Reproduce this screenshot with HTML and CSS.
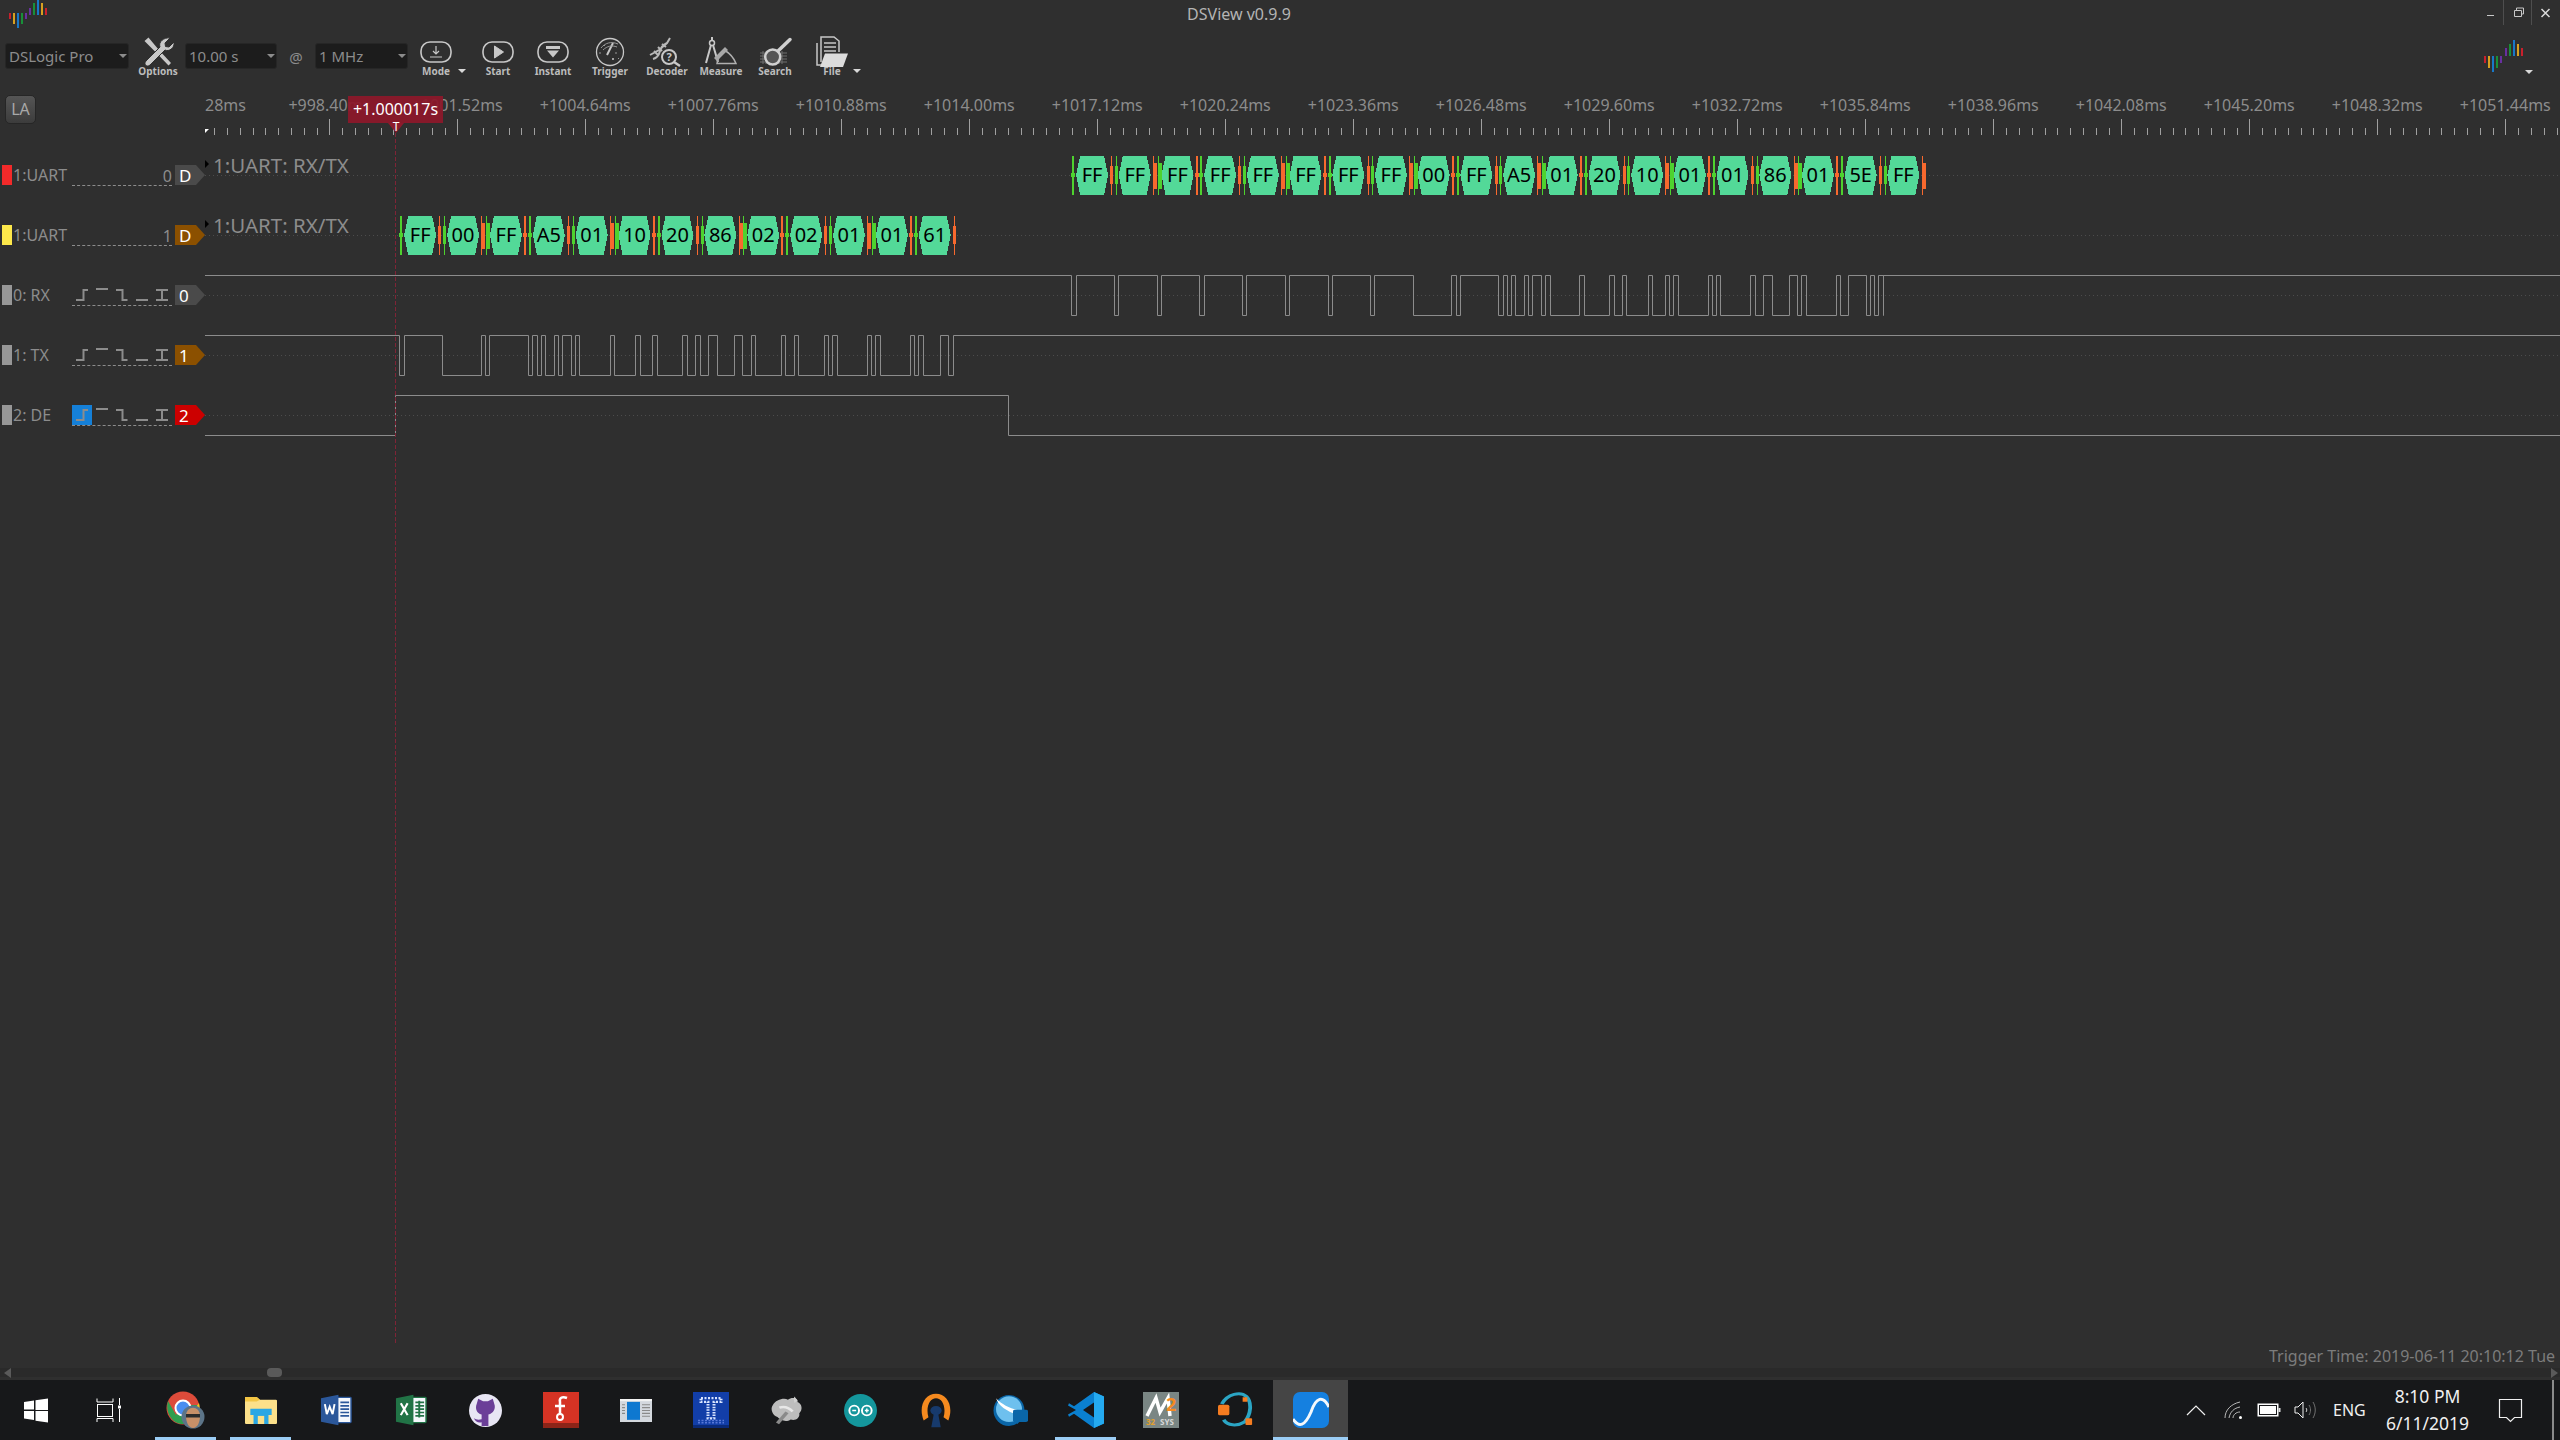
FILE: index.html
```html
<!DOCTYPE html>
<html lang="en">

<head>
    <meta charset="UTF-8">
    <title>DSView v0.9.9</title>
    <link rel="stylesheet" href="styles.css">
</head>

<body>
    <div class="window">
        <!-- title bar -->
        <div class="titlebar">
            <svg class="logo" width="48" height="28" viewBox="0 0 48 28">
                <rect x="9" y="13" width="2" height="6" fill="#c8202c" />
                <rect x="13" y="13" width="2" height="11" fill="#d8a020" />
                <rect x="17" y="13" width="2" height="15" fill="#1878c8" />
                <rect x="21" y="13" width="2" height="11" fill="#189038" />
                <rect x="25" y="13" width="2" height="6" fill="#6830a0" />
                <rect x="29" y="8" width="2" height="7" fill="#6830a0" />
                <rect x="33" y="3" width="2" height="12" fill="#189038" />
                <rect x="37" y="0" width="2" height="15" fill="#1878c8" />
                <rect x="41" y="3" width="2" height="12" fill="#d8a020" />
                <rect x="45" y="8" width="2" height="7" fill="#c8202c" />
            </svg>
            <span class="title">DSView v0.9.9</span>
            <div class="win-buttons">
                <svg class="win-btn" width="28" height="25" viewBox="0 0 28 25">
                    <path d="M11 15.500h7" stroke="#c8c8c8" stroke-width="1" />
                </svg>
                <svg class="win-btn win-btn-line" width="28" height="25" viewBox="0 0 28 25">
                    <path d="M10.500 10.500h7v6h-7zM12.500 10.500v-2.500h7v6h-2" fill="none" stroke="#c8c8c8" />
                </svg>
                <svg class="win-btn win-btn-line" width="28" height="25" viewBox="0 0 28 25">
                    <path d="M9.500 9l8 8M17.500 9l-8 8" stroke="#dcdcdc" stroke-width="1.500" />
                </svg>
            </div>
        </div>

        <!-- toolbar -->
        <div class="toolbar">
            <div class="combo combo-device">DSLogic Pro</div>
            <div class="tool tool-options">
                <svg width="32" height="32" viewBox="0 0 32 32">
                    <path d="M2.500 5l4-3.500 10 12 12.500 13.500-2.500 2.500-13-13.500z" fill="#c8c8c8" />
                    <path d="M28 2l-5 5 .5 3.500 3.500 .5 5-5c1 6-5 10-9 8L8 29c-3 3-7-1-4-4L18 11C16 6 22 1 28 2z" fill="#c8c8c8" stroke="#2f2f2f" stroke-width="1" />
                </svg>
                <span>Options</span>
            </div>
            <div class="combo combo-time">10.00 s</div>
            <span class="at">@</span>
            <div class="combo combo-rate">1 MHz</div>
            <div class="tool tool-mode">
                <svg width="34" height="24" viewBox="0 0 34 24">
                    <rect x="2" y="2" width="30" height="20" rx="9" fill="none" stroke="#c8c8c8" stroke-width="1.600" />
                    <path d="M17 6v8M14 11l3 3 3-3M11 17h12" fill="none" stroke="#c8c8c8" stroke-width="1.200" />
                </svg>
                <span>Mode</span>
            </div>
            <i class="drop drop-mode"></i>
            <div class="tool tool-start">
                <svg width="34" height="24" viewBox="0 0 34 24">
                    <rect x="2" y="2" width="30" height="20" rx="9" fill="none" stroke="#c8c8c8" stroke-width="1.600" />
                    <path d="M13.500 6l9 6-9 6z" fill="#c8c8c8" stroke="#c8c8c8" stroke-linejoin="round" />
                </svg>
                <span>Start</span>
            </div>
            <div class="tool tool-instant">
                <svg width="34" height="24" viewBox="0 0 34 24">
                    <rect x="2" y="2" width="30" height="20" rx="9" fill="none" stroke="#c8c8c8" stroke-width="1.600" />
                    <path d="M10 6h14v3h-14zM11 10.500h12l-6 7z" fill="#c8c8c8" />
                </svg>
                <span>Instant</span>
            </div>
            <div class="tool tool-trigger">
                <svg width="32" height="32" viewBox="0 0 32 32">
                    <circle cx="16" cy="16" r="13.500" fill="none" stroke="#c8c8c8" stroke-width="1.300" />
                    <path d="M13 19l6-12" stroke="#c8c8c8" stroke-width="2" />
                    <path d="M7 12c4-5 10-7 17-4M9 14c4-4 9-5 14-3M5 17l2 0M24 22l1 1M21 17l2 0M10 9l1 1" fill="none" stroke="#9a9a9a" stroke-width="1" />
                    <circle cx="19" cy="23" r="1" fill="#c8c8c8" />
                </svg>
                <span>Trigger</span>
            </div>
            <div class="tool tool-decoder">
                <svg width="36" height="36" viewBox="0 0 36 36">
                    <path d="M1 21l9-5 8-7 3-5M4 25c4-1 6-4 7-8s5-7 7-8M5 17l4 4M9 13l4 4M13 10l4 3" fill="none" stroke="#b8b8b8" stroke-width="2" />
                    <circle cx="20" cy="23" r="7" fill="#2f2f2f" stroke="#c8c8c8" stroke-width="2" />
                    <text x="20" y="27" class="decoder-mark">?</text>
                    <path d="M25 28l6 4" stroke="#c8c8c8" stroke-width="2.500" />
                </svg>
                <span>Decoder</span>
            </div>
            <div class="tool tool-measure">
                <svg width="36" height="36" viewBox="0 0 36 36">
                    <path d="M9 3v4M8 11L3 29M10 11l5 17" fill="none" stroke="#c8c8c8" stroke-width="2" />
                    <circle cx="9" cy="9" r="2.500" fill="none" stroke="#c8c8c8" stroke-width="1.500" />
                    <path d="M14 29.500c1-6 4-11 8-13 5 3 9 8 11 13z" fill="none" stroke="#b0b0b0" stroke-width="1.500" />
                    <path d="M11 24l11-11 3 3-11 11z" fill="#a8a8a8" />
                </svg>
                <span>Measure</span>
            </div>
            <div class="tool tool-search">
                <svg width="36" height="36" viewBox="0 0 36 36">
                    <path d="M3 19h27M3 22h27M3 25h27M3 28h27M6 17v13M9 17v13M22 17v13M25 17v13" stroke="#707070" stroke-width="1" />
                    <circle cx="15.700" cy="23" r="7.500" fill="#555" stroke="#d0d0d0" stroke-width="2.500" />
                    <path d="M21 17L33 5.500" stroke="#d0d0d0" stroke-width="3.500" stroke-linecap="round" />
                </svg>
                <span>Search</span>
            </div>
            <div class="tool tool-file">
                <svg width="34" height="34" viewBox="0 0 34 34">
                    <path d="M6 27V2h13l5 4v11" fill="none" stroke="#c8c8c8" stroke-width="1.500" />
                    <path d="M9 8h12M9 12h12M9 16h12" stroke="#c8c8c8" stroke-width="1.500" />
                    <path d="M2 8v22h4" fill="none" stroke="#c8c8c8" stroke-width="1.500" />
                    <path d="M10 18.500h23l-5 13.500H5z" fill="#dcdcdc" />
                </svg>
                <span>File</span>
            </div>
            <i class="drop drop-file"></i>
            <div class="spacer"></div>
            <div class="tool-logo">
                <svg width="42" height="34" viewBox="0 0 42 34">
                    <rect x="0" y="16" width="2" height="7" fill="#c8202c" />
                    <rect x="4" y="16" width="2" height="12" fill="#d8a020" />
                    <rect x="8" y="16" width="2" height="16" fill="#1878c8" />
                    <rect x="12" y="16" width="2" height="12" fill="#189038" />
                    <rect x="16" y="16" width="2" height="7" fill="#6830a0" />
                    <rect x="21" y="8" width="2" height="8" fill="#6830a0" />
                    <rect x="25" y="4" width="2" height="12" fill="#189038" />
                    <rect x="29" y="0" width="2" height="16" fill="#1878c8" />
                    <rect x="33" y="4" width="2" height="12" fill="#d8a020" />
                    <rect x="37" y="8" width="2" height="8" fill="#c8202c" />
                </svg>
                <i class="drop"></i>
            </div>
        </div>

        <!-- signal view -->
        <div class="main">
            <div class="corner">
                <div class="la-btn">LA</div>
            </div>
            <svg class="ruler" id="ruler" width="2355" height="45" viewBox="205 90 2355 45"></svg>

            <div class="headers">
                <div class="channel">
                    <i class="swatch swatch-red"></i>
                    <span class="ch-name">1:UART</span>
                    <div class="ch-mid">0</div>
                    <div class="tag tag-grey">D</div>
                </div>
                <div class="channel">
                    <i class="swatch swatch-yellow"></i>
                    <span class="ch-name">1:UART</span>
                    <div class="ch-mid">1</div>
                    <div class="tag tag-brown">D</div>
                </div>
                <div class="channel">
                    <i class="swatch"></i>
                    <span class="ch-name">0: RX</span>
                    <div class="ch-mid">
                        <svg class="edges" width="100" height="20" viewBox="0 0 100 20">
                            <use href="#edgeIcons" />
                        </svg>
                    </div>
                    <div class="tag tag-grey">0</div>
                </div>
                <div class="channel">
                    <i class="swatch"></i>
                    <span class="ch-name">1: TX</span>
                    <div class="ch-mid">
                        <svg class="edges" width="100" height="20" viewBox="0 0 100 20">
                            <use href="#edgeIcons" />
                        </svg>
                    </div>
                    <div class="tag tag-brown">1</div>
                </div>
                <div class="channel">
                    <i class="swatch"></i>
                    <span class="ch-name">2: DE</span>
                    <div class="ch-mid">
                        <svg class="edges" width="100" height="20" viewBox="0 0 100 20">
                            <rect width="20" height="20" fill="#1580d8" />
                            <use href="#edgeIcons" />
                        </svg>
                    </div>
                    <div class="tag tag-red">2</div>
                </div>
            </div>

            <svg class="waves" id="waves" width="2355" height="1233" viewBox="205 135 2355 1233"></svg>

            <div class="cursor-label">+1.000017s</div>
            <i class="cursor-tip"></i>
            <span class="cursor-t">T</span>
            <i class="cursor-line"></i>
            <div class="trigger-time">Trigger Time: 2019-06-11 20:10:12 Tue</div>
        </div>

        <!-- scroll bar -->
        <div class="scrollbar">
            <i class="arrow-left"></i>
            <i class="handle"></i>
            <i class="arrow-right"></i>
        </div>

        <!-- taskbar -->
        <div class="taskbar">
            <div class="task">
                <svg width="30" height="36" viewBox="0 0 30 36">
                    <path d="M3 10l10-1.500v9h-10zM14.500 8.200L27 6.500v11.500h-12.500zM3 19h10v9l-10-1.500zM14.500 19h12.500v11.500l-12.500-1.700z" fill="#fff" />
                </svg>
            </div>
            <div class="task">
                <svg width="30" height="36" viewBox="0 0 30 36">
                    <path d="M1 6.500v3.500h16v-3.500M1 30v-3.500h16v3.500" fill="none" stroke="#fff" />
                    <rect x="1.500" y="12.500" width="15" height="12" fill="none" stroke="#fff" />
                    <path d="M23.500 6v7M23.500 17v13" stroke="#fff" />
                    <rect x="22" y="13.500" width="3" height="3" fill="#fff" />
                </svg>
            </div>
            <div class="task task-open">
                <svg class="icon-chrome" width="40" height="38" viewBox="0 0 40 38">
                    <circle cx="17" cy="17" r="16.500" fill="#dd4b3a" />
                    <path d="M2 10l8 14 7-10h16c1 8-3 17-12 19l-6 0C5 31 -1 21 2 10z" fill="#2f9e4e" />
                    <path d="M33 12c2 7-1 16-9 20h-4l7-12z" fill="#f6c21c" />
                    <circle cx="17" cy="17" r="7.500" fill="#4a8ef0" stroke="#fff" stroke-width="2" />
                    <circle cx="27" cy="26" r="11.500" fill="#5c7488" />
                    <path d="M20 25c0-11 14-11 14 0 0 7-3 12-7 12s-7-5-7-12z" fill="#c89068" />
                    <path d="M20 23h14v3.500h-14z" fill="#2c2c2c" />
                </svg>
            </div>
            <div class="task task-open">
                <svg width="32" height="27" viewBox="3 3 30 30" preserveAspectRatio="none">
                    <path d="M3 3h11l3 3h15c1 0 1 1 1 1v25c0 1-1 1-1 1H4c-1 0-1-1-1-1z" fill="#fce08a" />
                    <path d="M3 3h11l3 3-3 2H3z" fill="#f3c544" />
                    <path d="M8 16h20v7h-3v10h-14v-10h-3z" fill="#2aa7e4" />
                    <rect x="15" y="24" width="6" height="9" fill="#fce08a" />
                </svg>
            </div>
            <div class="task">
                <svg width="32" height="32" viewBox="0 2 33 38" preserveAspectRatio="none">
                    <path d="M17 6h14c1 0 1 1 1 1v28c0 1-1 1-1 1H17z" fill="#f4f7fc" stroke="#2b579a" stroke-width="1.500" />
                    <path d="M21 12h9M21 16h9M21 20h9M21 24h9M21 28h9" stroke="#2b579a" stroke-width="2" />
                    <path d="M1 7L19 3v36L1 35z" fill="#2b579a" />
                    <path d="M5 14l2 12 3-9 3 9 2-12" fill="none" stroke="#fff" stroke-width="2" />
                </svg>
            </div>
            <div class="task">
                <svg width="32" height="32" viewBox="0 2 33 38" preserveAspectRatio="none">
                    <path d="M17 6h14c1 0 1 1 1 1v28c0 1-1 1-1 1H17z" fill="#f4f7fc" stroke="#217346" stroke-width="1.500" />
                    <path d="M21 12h9M21 16h9M21 20h9M21 24h9M21 28h9M25 10v20" stroke="#217346" stroke-width="2" />
                    <path d="M1 7L19 3v36L1 35z" fill="#217346" />
                    <path d="M6 13l7 14M13 13l-7 14" stroke="#fff" stroke-width="2.200" />
                </svg>
            </div>
            <div class="task">
                <svg width="33" height="33" viewBox="1 1 34 34">
                    <circle cx="18" cy="18" r="17" fill="#e8e6f4" />
                    <path d="M9 11l1.500-5 5 2.500h5l5-2.500 1.500 5c2 5-1 10-6 11v12h-7v-4c-3 1-6 0-8-4 2 1 4 2 8 1v-5C9 21 7 16 9 11z" fill="#6b3f98" />
                </svg>
            </div>
            <div class="task">
                <svg width="36" height="36" viewBox="0 0 36 36">
                    <rect width="36" height="36" fill="#d53324" />
                    <rect y="31" width="36" height="5" fill="#8c2418" />
                    <path d="M24 6c-5-2-8 0-7 4v13" fill="none" stroke="#fff" stroke-width="2.500" />
                    <path d="M12 14h10" stroke="#fff" stroke-width="2.500" />
                    <circle cx="17" cy="25" r="3" fill="#d53324" stroke="#fff" stroke-width="2" />
                </svg>
            </div>
            <div class="task">
                <svg width="32" height="23" viewBox="0 0 32 32" preserveAspectRatio="none">
                    <rect width="32" height="32" fill="#d4d8de" />
                    <rect width="32" height="3" fill="#f2f2f2" />
                    <rect x="7" y="4" width="13" height="25" fill="#0e78d0" />
                    <path d="M2 8h3M2 12h3M2 16h3M2 20h3M22 8h8M22 12h8M22 16h8M22 20h8M22 24h8" stroke="#8a8a8a" stroke-width="1.500" />
                </svg>
            </div>
            <div class="task">
                <svg width="36" height="36" viewBox="0 0 36 48" preserveAspectRatio="none">
                    <rect width="36" height="48" fill="#123ea8" />
                    <rect y="44" width="36" height="4" fill="#0a2a78" />
                    <path d="M8 8h20v5h-7v22h-6v-22h-7z" fill="none" stroke="#d8e4ff" stroke-width="3" stroke-dasharray="2 1.500" />
                    <path d="M5 38h26M5 41h26" stroke="#5878d8" stroke-width="2" stroke-dasharray="2 1.500" />
                </svg>
            </div>
            <div class="task">
                <svg width="36" height="30" viewBox="0 0 38 38" preserveAspectRatio="none">
                    <path d="M5 13c3-7 12-10 16-7 5-5 12-1 10 3 5 2 6 10 2 14 1 6-4 10-9 8-5 4-11 1-14-3-5-2-8-10-5-15z" fill="#bdbdbd" />
                    <path d="M10 36l10-14" stroke="#8a8a8a" stroke-width="4" />
                    <path d="M12 16c5-2 10 0 14 5" fill="none" stroke="#e8e8e8" stroke-width="3" />
                    <path d="M28 2l3 5-3 3-1-5z" fill="#d0d0d0" />
                </svg>
            </div>
            <div class="task">
                <svg width="33" height="33" viewBox="0 0 34 34">
                    <circle cx="17" cy="17" r="17" fill="#14969c" />
                    <circle cx="10.500" cy="17" r="5" fill="none" stroke="#fff" stroke-width="2" />
                    <circle cx="23.500" cy="17" r="5" fill="none" stroke="#fff" stroke-width="2" />
                    <path d="M8.500 17h4M21.500 17h4M23.500 15v4" stroke="#fff" stroke-width="1.500" />
                </svg>
            </div>
            <div class="task">
                <svg width="34" height="35" viewBox="0 0 36 46" preserveAspectRatio="none">
                    <path d="M5 36C-1 18 6 1 18 1s19 17 13 35l-5-4c3-13-1-25-8-25S7 19 10 32z" fill="#f58a1f" />
                    <circle cx="18" cy="23" r="6" fill="#173a6c" />
                    <path d="M16 25h4l3 20h-10z" fill="#173a6c" />
                </svg>
            </div>
            <div class="task">
                <svg width="36" height="33" viewBox="0 0 36 46" preserveAspectRatio="none">
                    <ellipse cx="16" cy="23" rx="15.500" ry="21.500" fill="#0a66a8" />
                    <ellipse cx="16" cy="21" rx="13" ry="18" fill="#6ec0ee" />
                    <path d="M3 6c7 10 15 15 27 18l-2 7C15 25 6 18 3 6z" fill="#fff" />
                    <rect x="20" y="22" width="15" height="17" rx="2" fill="#0a66a8" />
                </svg>
            </div>
            <div class="task task-open">
                <svg width="36" height="36" viewBox="0 0 36 48" preserveAspectRatio="none">
                    <path d="M26 0l10 6v36l-10 6-20-19-5 4-1-3 8-6-8-6 1-3 5 4z" fill="#0a80d0" />
                    <path d="M26 0l10 6v36l-10 6z" fill="#24aaf0" />
                    <path d="M26 14v20l-11-10z" fill="#17181a" />
                </svg>
            </div>
            <div class="task">
                <svg width="36" height="36" viewBox="0 0 36 36">
                    <rect width="36" height="36" fill="#7a8684" />
                    <path d="M4 24L13 6l4 14 8-14 2 18" fill="none" stroke="#fff" stroke-width="3.500" />
                    <text x="23" y="19" class="m2-big">2</text>
                    <text x="3" y="33" class="m2-small">32</text>
                    <text x="17" y="33" class="m2-small m2-grey">SYS</text>
                </svg>
            </div>
            <div class="task">
                <svg width="36" height="36" viewBox="0 0 38 48" preserveAspectRatio="none">
                    <path d="M4 16C10 2 24-1 30 6c6 8 5 24-2 34-8 6-18 5-22-3" fill="none" stroke="#2ba5c4" stroke-width="4" />
                    <rect x="0" y="17" width="12" height="14" rx="2" fill="#f57c20" />
                    <rect x="26" y="7" width="5" height="6" fill="#f57c20" />
                    <rect x="29" y="35" width="7" height="9" rx="1" fill="#f57c20" />
                </svg>
            </div>
            <div class="task task-current">
                <svg width="36" height="36" viewBox="0 0 36 36">
                    <rect width="36" height="36" rx="7" fill="#1580e0" />
                    <path d="M0 27C6 36 12 34 18 20 23 5 30 3 36 15" fill="none" stroke="#f4f8fc" stroke-width="3" />
                </svg>
            </div>

            <div class="tray">
                <svg class="tray-chevron" width="20" height="12" viewBox="0 0 20 12">
                    <path d="M1 11l9-9 9 9" fill="none" stroke="#f0f0f0" stroke-width="1.200" />
                </svg>
                <svg class="tray-wifi" width="20" height="20" viewBox="0 0 20 20">
                    <path d="M1 18c0-8 6-14 15-16M5 18c1-6 5-10 11-11M9 18c0-3 3-6 7-6" fill="none" stroke="#b8b8b8" stroke-width="1" />
                    <circle cx="16.500" cy="17.500" r="1.500" fill="#fff" />
                </svg>
                <svg class="tray-battery" width="24" height="14" viewBox="0 0 24 14">
                    <rect x="1" y="1" width="20" height="12" fill="#fff" stroke="#fff" />
                    <rect x="2.500" y="2.500" width="17" height="9" fill="#fff" stroke="#17181a" stroke-width="1" />
                    <rect x="21.500" y="5" width="2" height="4" fill="#e0e0e0" />
                </svg>
                <svg class="tray-volume" width="24" height="18" viewBox="0 0 24 18">
                    <path d="M1 6h3l5-5v16l-5-5h-3z" fill="none" stroke="#f0f0f0" />
                    <path d="M12 7c1 1 1 3 0 4" fill="none" stroke="#d0d0d0" />
                    <path d="M15 4c2 3 2 7 0 10M19 1c3 5 3 11 0 16" fill="none" stroke="#707070" />
                </svg>
                <span class="tray-lang">ENG</span>
                <div class="clock">
                    <span>8:10 PM</span>
                    <span>6/11/2019</span>
                </div>
                <svg class="tray-note" width="26" height="26" viewBox="0 0 26 26">
                    <path d="M1.500 2.500h22v18h-7l-4 4-4-4h-7z" fill="none" stroke="#f0f0f0" stroke-width="1.200" />
                </svg>
                <i class="show-desktop"></i>
            </div>
        </div>
    </div>

    <!-- trigger edge glyphs used by the channel headers -->
    <svg class="defs" width="0" height="0">
        <defs>
            <g id="edgeIcons" fill="none" stroke="#8c8c8c" stroke-width="2">
                <path d="M4 15h7.500v-10h4.500" />
                <path d="M24 4h12" />
                <path d="M44 5h6.500v10h5" />
                <path d="M64 15h12" />
                <path d="M84 5h12M84 15h12M90 5v10" />
            </g>
        </defs>
    </svg>

    <script src="script.js"></script>
</body>

</html>
```

FILE: styles.css
```css
html,
body {
    margin: 0;
    height: 100%;
    overflow: hidden;
}

body {
    font-family: "Noto Sans", sans-serif;
    background-color: #2f2f2f;
    color: #8c8c8c;
}

i {
    display: block;
}

.window {
    display: flex;
    flex-direction: column;
    height: 1440px;
}

/* title bar */
.titlebar {
    display: flex;
    height: 28px;
    flex: none;
}

.logo {
    flex: none;
}

.title {
    width: 2350px;
    padding-left: 32px;
    box-sizing: border-box;
    text-align: center;
    font-size: 16px;
    line-height: 28px;
    color: #b4b4b4;
}

.win-buttons {
    display: flex;
    margin-left: auto;
}

.win-btn {
    flex: none;
    display: block;
}

.win-btn-line {
    border-left: 1px solid #4e4e4e;
    margin-left: -1px;
}

/* toolbar */
.toolbar {
    display: flex;
    height: 62px;
    flex: none;
}

.combo {
    position: relative;
    flex: none;
    height: 26px;
    margin-top: 15px;
    box-sizing: border-box;
    padding-left: 3px;
    background-color: #1c1c1c;
    border: 1px solid #262626;
    border-radius: 3px;
    font-size: 15px;
    line-height: 25px;
}

.combo::after {
    content: "";
    position: absolute;
    right: 1px;
    top: 10px;
    border-left: 4px solid transparent;
    border-right: 4px solid transparent;
    border-top: 4px solid #8c8c8c;
}

.combo-device {
    width: 124px;
    margin-left: 5px;
}

.combo-time {
    width: 92px;
    margin-left: 4px;
}

.combo-rate {
    width: 93px;
}

.at {
    width: 38px;
    flex: none;
    text-align: center;
    font-size: 15px;
    line-height: 58px;
}

.tool {
    flex: none;
    width: 46px;
    height: 52px;
    position: relative;
}

.tool svg {
    position: absolute;
    left: 50%;
    top: 23.5px;
    transform: translate(-50%, -50%);
}

.tool span {
    position: absolute;
    top: 37px;
    left: -10px;
    right: -10px;
    text-align: center;
    font-size: 10px;
    font-weight: 700;
    line-height: 12px;
    color: #bcbcbc;
}

.tool-options {
    margin-left: 6px;
}

.tool-mode {
    margin-left: 5px;
}

.tool-start,
.tool-instant {
    margin-left: 9px;
}

.tool-trigger,
.tool-decoder,
.tool-file {
    margin-left: 11px;
}

.tool-measure,
.tool-search {
    margin-left: 8px;
}

.drop {
    flex: none;
    width: 0;
    height: 0;
    border-left: 4px solid transparent;
    border-right: 4px solid transparent;
    border-top: 4px solid #d8d8d8;
}

.drop-mode {
    margin-top: 41px;
    margin-left: -1px;
}

.drop-file {
    margin-top: 41px;
    margin-left: -2px;
}

.spacer {
    flex: 1;
}

.tool-logo {
    flex: none;
    display: flex;
    margin-right: 27px;
    padding-top: 12px;
}

.tool-logo .drop {
    margin-top: 30px;
    margin-left: -1px;
}

.decoder-mark {
    font-size: 11px;
    font-weight: 700;
    fill: #c8c8c8;
    text-anchor: middle;
}

/* signal view */
.main {
    flex: 1;
    display: grid;
    grid-template-columns: 205px 2355px;
    grid-template-rows: 45px 1233px;
    position: relative;
    overflow: hidden;
}

.corner {
    padding: 5px 0 0 5px;
}

.la-btn {
    width: 31px;
    height: 29px;
    box-sizing: border-box;
    border: 1px solid #262626;
    border-radius: 5px;
    background: linear-gradient(#555555, #3c3c3c);
    font-size: 16px;
    line-height: 27px;
    text-align: center;
    color: #a8a8a8;
}

.ruler,
.waves {
    display: block;
}

.ruler text {
    font-size: 16px;
    fill: #8c8c8c;
    text-anchor: middle;
}

.ruler .first-label {
    text-anchor: start;
}

.headers {
    padding-top: 25px;
}

.channel {
    display: flex;
    height: 60px;
    padding-left: 2px;
    align-items: flex-start;
}

.swatch {
    flex: none;
    width: 10px;
    height: 20px;
    margin-top: 5px;
    background-color: #979797;
}

.swatch-red {
    background-color: #f32a2a;
}

.swatch-yellow {
    background-color: #fde84b;
}

.ch-name {
    flex: none;
    width: 60px;
    padding-left: 1px;
    box-sizing: border-box;
    font-size: 16px;
    line-height: 24px;
    margin-top: 3px;
}

.ch-mid {
    flex: none;
    width: 100px;
    height: 20px;
    margin-top: 5px;
    border-bottom: 1px dashed #8c8c8c;
    text-align: right;
    font-size: 16px;
    line-height: 22px;
}

.edges {
    display: block;
}

.tag {
    flex: none;
    width: 30px;
    height: 20px;
    margin-top: 5px;
    margin-left: 3px;
    padding-left: 4px;
    box-sizing: border-box;
    clip-path: polygon(0 0, 70% 0, 100% 50%, 70% 100%, 0 100%);
    font-size: 17px;
    line-height: 21px;
    color: #fff;
}

.tag-grey {
    background-color: #4a4a4a;
}

.tag-brown {
    background-color: #8b5000;
}

.tag-red {
    background-color: #cc0000;
}

.waves text {
    font-size: 20px;
    fill: #000;
    text-anchor: middle;
}

.waves .dec-title {
    font-size: 20.500px;
    fill: #8c8c8c;
    text-anchor: start;
}

/* cursor and overlays */
.cursor-label {
    position: absolute;
    left: 348px;
    top: 6px;
    width: 95px;
    height: 27px;
    background-color: rgba(140, 24, 42, 0.94);
    color: #fff;
    font-size: 16px;
    line-height: 27px;
    text-align: center;
}

.cursor-tip {
    position: absolute;
    left: 388px;
    top: 33px;
    width: 16px;
    height: 10px;
    background-color: #8c1a2c;
    clip-path: polygon(0 0, 100% 0, 50% 100%);
}

.cursor-t {
    position: absolute;
    left: 391px;
    top: 31px;
    width: 10px;
    text-align: center;
    font-size: 12px;
    line-height: 12px;
    color: #fff;
}

.cursor-line {
    position: absolute;
    left: 395px;
    top: 43px;
    height: 1212px;
    width: 1px;
    background-image: linear-gradient(#7f2436 65%, transparent 65%);
    background-size: 1px 6px;
}

.trigger-time {
    position: absolute;
    left: 2269px;
    top: 1256px;
    width: 291px;
    overflow: hidden;
    white-space: nowrap;
    font-size: 16px;
    line-height: 20px;
    color: #7c7c7c;
}

/* scroll bar */
.scrollbar {
    flex: none;
    height: 9px;
    margin-bottom: 3px;
    background-color: #2a2a2a;
    display: flex;
    align-items: center;
}

.arrow-left {
    width: 0;
    height: 0;
    margin-left: 4px;
    border-top: 5px solid transparent;
    border-bottom: 5px solid transparent;
    border-right: 7px solid #5a5a5a;
}

.handle {
    width: 15px;
    height: 9px;
    margin-left: 256px;
    border-radius: 4px;
    background-color: #5a5a5a;
}

.arrow-right {
    width: 0;
    height: 0;
    margin-left: auto;
    margin-right: 2px;
    border-top: 5px solid transparent;
    border-bottom: 5px solid transparent;
    border-left: 7px solid #5a5a5a;
}

/* taskbar */
.taskbar {
    display: flex;
    flex: none;
    height: 60px;
    background-color: #17181a;
    color: #f0f0f0;
}

.task {
    position: relative;
    flex: none;
    width: 75px;
    height: 60px;
    display: flex;
    align-items: center;
    justify-content: center;
}

.task:first-child {
    margin-left: -2px;
}

.task-open::after,
.task-current::after {
    content: "";
    position: absolute;
    left: 7px;
    right: 7px;
    bottom: 0;
    height: 3px;
    background-color: #9bcdf5;
}

.task-current {
    background-color: #454545;
}

.task-current::after {
    left: 0;
    right: 0;
}

.m2-big {
    font-size: 18px;
    font-weight: 700;
    fill: #f58a1f;
}

.m2-small {
    font-size: 8px;
    font-weight: 700;
    fill: #e0a030;
}

.m2-grey {
    fill: #d8d8d8;
}

.tray {
    display: flex;
    align-items: center;
    margin-left: auto;
    height: 60px;
}

.tray-chevron {
    margin-right: 18px;
}

.tray-wifi {
    margin-right: 13px;
}

.tray-battery {
    margin-right: 13px;
}

.tray-volume {
    margin-right: 15px;
}

.tray-lang {
    font-size: 16px;
    width: 36px;
}

.clock {
    display: flex;
    flex-direction: column;
    align-items: center;
    width: 95px;
    margin-left: 11px;
    font-size: 17.500px;
    line-height: 27px;
}

.tray-note {
    margin-left: 23px;
    margin-right: 28px;
}

.show-desktop {
    width: 2px;
    height: 60px;
    margin-right: 6px;
    background-color: #8a8a8a;
}

.defs {
    position: absolute;
}
```

FILE: script.js
```js
var NS = 'http://www.w3.org/2000/svg';
var RX_BYTES = ['FF', 'FF', 'FF', 'FF', 'FF', 'FF', 'FF', 'FF', '00', 'FF', 'A5', '01', '20', '10', '01', '01', '86', '01', '5E', 'FF'];
var TX_BYTES = ['FF', '00', 'FF', 'A5', '01', '10', '20', '86', '02', '02', '01', '01', '61'];
var RX_START = 1071.3;
var TX_START = 399.4;
// the two devices run on slightly different clocks
var RX_BIT = 4.27;
var TX_BIT = 4.288;
var RIGHT = 2560;

var ruler = document.getElementById('ruler');
var waves = document.getElementById('waves');

function add(parent, name, attrs, text) {
    var el = document.createElementNS(NS, name);
    for (var k in attrs) {
        el.setAttribute(k, attrs[k]);
    }
    if (text) {
        el.textContent = text;
    }
    parent.appendChild(el);
    return el;
}

function drawRuler() {
    var d = '';
    for (var i = 1; i < 190; i++) {
        var x = Math.round(201.3 + i * 12.8) + 0.5;
        d += 'M' + x + ' ' + (i % 10 === 0 ? 119 : 128) + 'V135';
    }
    add(ruler, 'path', { d: d, stroke: '#a0a0a0', 'stroke-width': 1, fill: 'none' });
    add(ruler, 'polygon', { points: '205,129 209,129 205,133', fill: '#fff' });
    add(ruler, 'text', { class: 'first-label', x: 205, y: 111 }, '28ms');
    for (var k = 1; k < 19; k++) {
        var label = '+' + (995.28 + k * 3.12).toFixed(2) + 'ms';
        add(ruler, 'text', { x: 201.3 + k * 128, y: 111 }, label);
    }
}

// UART line: start bit low, data LSB first, stop bit high
function uartPath(bytes, start, bitWidth, high, low, limit) {
    var d = 'M205 ' + high;
    var level = 1;
    bytes.forEach(function (hex, n) {
        var value = parseInt(hex, 16);
        var bits = [0];
        for (var b = 0; b < 8; b++) {
            bits.push((value >> b) & 1);
        }
        bits.push(1);
        bits.forEach(function (bit, i) {
            if (bit !== level) {
                var x = Math.round(start + (n * 10 + i) * bitWidth) + 0.5;
                d += 'H' + Math.min(x, limit) + 'V' + (bit ? high : low);
                level = bit;
            }
        });
    });
    return d + 'H' + RIGHT;
}

function drawRows() {
    [175, 235, 295, 355, 415].forEach(function (y) {
        add(waves, 'path', { d: 'M205 ' + (y + 0.5) + 'H' + RIGHT, stroke: '#4c4c4c', 'stroke-dasharray': '1 3' });
    });
    var trace = { fill: 'none', stroke: '#8c8c8c', 'stroke-width': 1 };
    function wave(d) {
        add(waves, 'path', Object.assign({ d: d }, trace));
    }
    wave(uartPath(RX_BYTES, RX_START, RX_BIT, 275.5, 315.5, 1883.5));
    wave(uartPath(TX_BYTES, TX_START, TX_BIT, 335.5, 375.5, RIGHT));
    wave('M205 435.5H395.5V395.5H1008.5V435.5H' + RIGHT);
}

function bar(x, w, y, h, color) {
    add(waves, 'rect', { x: x, y: y, width: w, height: h, fill: color });
}

// start and stop bits are too short to show a label, so they only show as ticks
function bitMark(x, row, color, variant) {
    if (variant === 0) {
        bar(x, 2, row - 19, 39, color);
        bar(x - 1, 4, row - 2, 4, color);
    } else if (variant === 1) {
        bar(x + 1, 1, row - 19, 39, color);
        bar(x, 3, row - 9, 18, color);
    } else {
        bar(x, 1, row - 19, 39, color);
        bar(x + 1, 3, row - 12, 26, color);
    }
}

function drawDecoded(bytes, start, bitWidth, row) {
    bytes.forEach(function (hex, n) {
        var xs = start + n * bitWidth * 10;
        var x0 = xs + bitWidth + 0.5;
        var x1 = x0 + 32;
        bitMark(Math.round(xs + 1), row, '#4ed22e', n % 3);
        add(waves, 'polygon', {
            points: [x0, row, x0 + 4, row - 19, x1 - 4, row - 19, x1, row, x1 - 4, row + 20, x0 + 4, row + 20].join(' '),
            fill: '#53d998',
            'shape-rendering': 'crispEdges'
        });
        add(waves, 'text', { x: (x0 + x1) / 2, y: row + 7 }, hex);
        bitMark(Math.round(xs + 39), row, '#f8692e', (n + 1) % 3);
    });
}

drawRuler();
drawRows();
add(waves, 'text', { class: 'dec-title', x: 213, y: 173 }, '1:UART: RX/TX');
add(waves, 'text', { class: 'dec-title', x: 213, y: 233 }, '1:UART: RX/TX');
add(waves, 'polygon', { points: '205,160 209,164 205,168', fill: '#000' });
add(waves, 'polygon', { points: '205,220 209,224 205,228', fill: '#000' });
drawDecoded(RX_BYTES, RX_START, RX_BIT, 175);
drawDecoded(TX_BYTES, TX_START, TX_BIT, 235);
```
